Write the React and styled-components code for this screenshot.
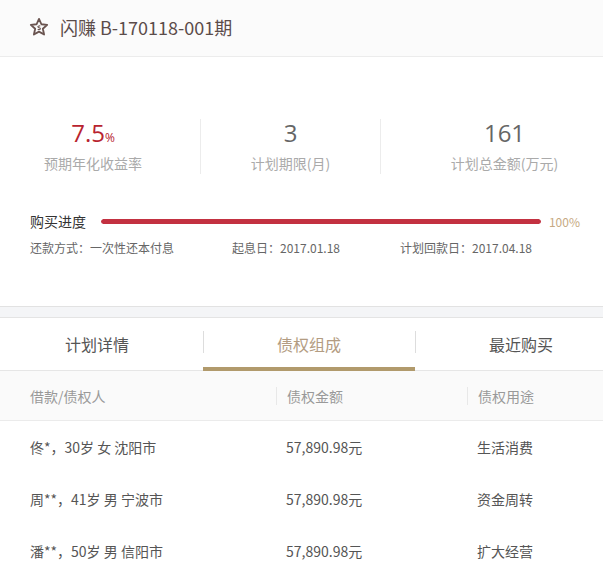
import React from 'react';
import styled, { createGlobalStyle } from 'styled-components';

const Global = createGlobalStyle`
  html, body {
    margin: 0;
    padding: 0;
    background: #fff;
  }
  body {
    font-family: "Noto Sans CJK SC", "Noto Sans", sans-serif;
    color: #555;
  }
  * { box-sizing: border-box; }
`;

const Page = styled.div`
  width: 603px;
  height: 575px;
  overflow: hidden;
  background: #fff;
`;

const Header = styled.header`
  height: 57px;
  display: flex;
  align-items: center;
  gap: 11px;
  padding: 0 0 2px 29px;
  background: #fbfbfb;
  border-bottom: 1px solid #ececec;
`;

const Title = styled.h1`
  margin: 0;
  font-size: 18px;
  font-weight: 400;
  line-height: 24px;
  color: #5b4c4a;
`;

const Summary = styled.section`
  padding: 62px 0 49px;
`;

const Stats = styled.div`
  display: grid;
  grid-template-columns: 200px 180px 1fr;
`;

const Stat = styled.div`
  display: flex;
  flex-direction: column;
  align-items: center;
  padding: ${p => p.$pad || '0'};
  border-left: ${p => (p.$divider ? '1px solid #ececec' : 'none')};
`;

const Num = styled.div`
  height: 28px;
  font-size: 24px;
  line-height: 28px;
  color: ${p => (p.$red ? '#b8232f' : '#666')};
  font-family: "Open Sans", "Noto Sans", sans-serif;
  small {
    font-size: 12px;
    line-height: 1;
  }
`;

const Label = styled.div`
  margin-top: 5px;
  font-size: 14px;
  line-height: 22px;
  color: #aaa;
`;

const ProgressRow = styled.div`
  margin-top: 37px;
  padding: 0 23px 0 30px;
  display: flex;
  align-items: center;
  height: 20px;
`;

const ProgressLabel = styled.span`
  font-size: 14px;
  color: #333;
  width: 71px;
  line-height: 20px;
`;

const Track = styled.div`
  flex: 1;
  height: 5px;
  border-radius: 3px;
  background: #eee;
  overflow: hidden;
`;

const Fill = styled.div`
  height: 100%;
  background: #c33141;
  border-radius: 3px;
`;

const Percent = styled.span`
  margin-left: 8px;
  font-size: 12px;
  color: #c6a982;
`;

const InfoRow = styled.div`
  margin-top: 8px;
  padding-left: 30px;
  display: grid;
  grid-template-columns: 202px 168px 1fr;
  font-size: 12px;
  line-height: 18px;
  color: #666;
`;

const Band = styled.div`
  height: 12px;
  background: #f4f5f7;
  border-top: 1px solid #e2e2e2;
  border-bottom: 1px solid #e4e4e4;
`;

const Tabs = styled.nav`
  display: grid;
  grid-template-columns: 203px 212px 1fr;
  height: 53px;
  border-bottom: 1px solid #e6e6e6;
`;

const Tab = styled.div`
  position: relative;
  display: flex;
  align-items: center;
  justify-content: center;
  padding: ${p => p.$pad || '0'};
  font-size: 16px;
  color: ${p => (p.$active ? '#b39c82' : '#555')};
  &::before {
    content: '';
    display: ${p => (p.$divider ? 'block' : 'none')};
    position: absolute;
    left: 0;
    top: 13px;
    height: 22px;
    border-left: 1px solid #ddd;
  }
  &::after {
    content: '';
    display: ${p => (p.$active ? 'block' : 'none')};
    position: absolute;
    left: 0;
    right: 0;
    bottom: -1px;
    height: 4px;
    background: #b19a6c;
  }
`;

const Table = styled.div`
  display: flex;
  flex-direction: column;
`;

const Row = styled.div`
  display: grid;
  grid-template-columns: 276px 191px 1fr;
  align-items: center;
  height: ${p => (p.$head ? '50px' : '52px')};
  background: ${p => (p.$head ? '#fafafa' : '#fff')};
  border-bottom: ${p => (p.$head ? '1px solid #ebebeb' : 'none')};
  font-size: 14px;
  color: ${p => (p.$head ? '#999' : '#555')};
`;

const Cell = styled.div`
  padding-left: ${p => (p.$first ? '30px' : '10px')};
  line-height: 18px;
  border-left: ${p => (p.$divider ? '1px solid #e8e8e8' : 'none')};
`;

const Star = () => (
  <svg width="20" height="20" viewBox="0 0 24 24" fill="none" stroke="#6a5450" strokeWidth="2.2" strokeLinejoin="round">
    <polygon points="12,2.2 14.9,8.7 21.8,9.4 16.6,14.1 18.1,21 12,17.5 5.9,21 7.4,14.1 2.2,9.4 9.1,8.7" />
    <path d="M13.5 11.1c-.5-.6-2.9-.7-2.9.7 0 1.4 3.1.8 3.1 2.3 0 1.3-2.5 1.2-3.2.5" strokeWidth="1.3" />
  </svg>
);

const rows = [
  ['佟*，30岁 女 沈阳市', '57,890.98元', '生活消费'],
  ['周**，41岁 男 宁波市', '57,890.98元', '资金周转'],
  ['潘**，50岁 男 信阳市', '57,890.98元', '扩大经营'],
];

export default function App() {
  return (
    <Page>
      <Global />
      <Header>
        <Star />
        <Title>闪赚 B-170118-001期</Title>
      </Header>

      <Summary>
        <Stats>
          <Stat $pad="0 14px 0 0">
            <Num $red>7.5<small>%</small></Num>
            <Label>预期年化收益率</Label>
          </Stat>
          <Stat $divider>
            <Num>3</Num>
            <Label>计划期限(月)</Label>
          </Stat>
          <Stat $divider $pad="0 0 0 25px">
            <Num>161</Num>
            <Label>计划总金额(万元)</Label>
          </Stat>
        </Stats>

        <ProgressRow>
          <ProgressLabel>购买进度</ProgressLabel>
          <Track>
            <Fill style={{ width: '100%' }} />
          </Track>
          <Percent>100%</Percent>
        </ProgressRow>

        <InfoRow>
          <span>还款方式：一次性还本付息</span>
          <span>起息日：2017.01.18</span>
          <span>计划回款日：2017.04.18</span>
        </InfoRow>
      </Summary>

      <Band />

      <Tabs>
        <Tab $pad="0 9px 0 0">计划详情</Tab>
        <Tab $divider $active>债权组成</Tab>
        <Tab $divider $pad="0 0 0 24px">最近购买</Tab>
      </Tabs>

      <Table>
        <Row $head>
          <Cell $first>借款/债权人</Cell>
          <Cell $divider>债权金额</Cell>
          <Cell $divider>债权用途</Cell>
        </Row>
        {rows.map(r => (
          <Row key={r[0]}>
            <Cell $first>{r[0]}</Cell>
            <Cell>{r[1]}</Cell>
            <Cell>{r[2]}</Cell>
          </Row>
        ))}
      </Table>
    </Page>
  );
}
